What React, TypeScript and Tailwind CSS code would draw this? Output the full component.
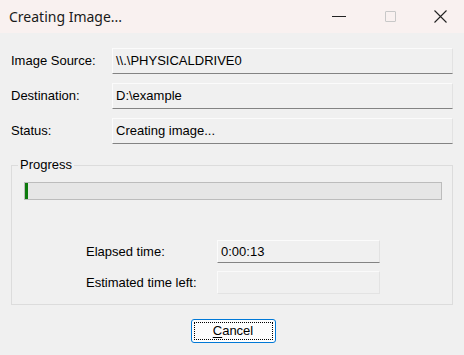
const fieldCls =
  "h-[26px] flex-1 flex items-center pl-[3px] border border-t-[#fbfbfb] border-l-[#fbfbfb] border-r-[#e2e2e2] border-b-[#838383] bg-[#f0f0f0]";

function Row({ label, value, last }: { label: string; value: string; last?: boolean }) {
  return (
    <div className={`flex items-center ${last ? "" : "mb-[9px]"}`}>
      <div className="w-[101px] shrink-0">{label}</div>
      <div className={fieldCls}>{value}</div>
    </div>
  );
}

export default function App() {
  return (
    <div
      className="w-[464px] h-[355px] flex flex-col bg-[#f0f0f0] text-[13px] text-black overflow-hidden"
      style={{ fontFamily: '"Liberation Sans", Arial, sans-serif' }}
    >
      {/* title bar */}
      <div className="h-[33px] shrink-0 flex items-center bg-[#f9f1f0]">
        <div className="pl-[9px] flex-1 text-[14px] text-[#1a1a1a]" style={{ fontFamily: '"Noto Sans", sans-serif' }}>
          Creating Image...
        </div>
        <div className="flex items-center h-full">
          <div className="w-[46px] h-full flex items-center justify-center">
            <div className="w-[14px] h-px bg-[#222]" />
          </div>
          <div className="w-[56px] h-full flex items-center justify-center">
            <div className="w-[11px] h-[11px] border border-[#c8c8c8] rounded-[1px]" />
          </div>
          <div className="w-[46px] h-full flex items-center justify-center pr-[2px]">
            <svg width="13" height="13" viewBox="0 0 13 13">
              <path d="M0.5 0.5 L12.5 12.5 M12.5 0.5 L0.5 12.5" stroke="#222" strokeWidth="1.1" fill="none" />
            </svg>
          </div>
        </div>
      </div>

      {/* body */}
      <div className="flex-1 flex flex-col px-[11px] pt-[15px]">
        <Row label="Image Source:" value="\\.\PHYSICALDRIVE0" />
        <Row label="Destination:" value="D:\example" />
        <Row label="Status:" value="Creating image..." last />

        <fieldset className="mt-[14px] h-[147px] border border-[#dcdcdc] pl-[12px] pr-[10px] pb-[10px]">
          <legend className="ml-[-6px] px-[2px] text-[13px] leading-[14px]">Progress</legend>
          <div className="mt-[10px] h-[18px] border border-[#bcbcbc] bg-[#e6e6e6] flex">
            <div className="w-[3px] h-full bg-[#0d7a0d]" />
          </div>
          <div className="mt-[40px] flex flex-col gap-[8px] pl-[62px]">
            <div className="flex items-center">
              <div className="w-[131px] shrink-0">Elapsed time:</div>
              <div className="w-[163px] h-[23px] flex items-center pl-[3px] border border-t-[#fbfbfb] border-l-[#fbfbfb] border-r-[#e2e2e2] border-b-[#838383]">
                0:00:13
              </div>
            </div>
            <div className="flex items-center">
              <div className="w-[131px] shrink-0">Estimated time left:</div>
              <div className="w-[163px] h-[23px] border border-[#e3e3e3] border-t-[#fafafa] border-l-[#fafafa]" />
            </div>
          </div>
        </fieldset>

        <div className="mt-[14px] flex justify-center">
          <button className="w-[85px] h-[24px] ml-[2px] rounded-[3px] border border-[#0078d7] bg-[#fdfdfd] p-[2px]">
            <div className="w-full h-full border border-dotted border-black flex items-center justify-center text-[13px]">
              <span>
                <span className="underline underline-offset-2">C</span>ancel
              </span>
            </div>
          </button>
        </div>
      </div>
    </div>
  );
}
